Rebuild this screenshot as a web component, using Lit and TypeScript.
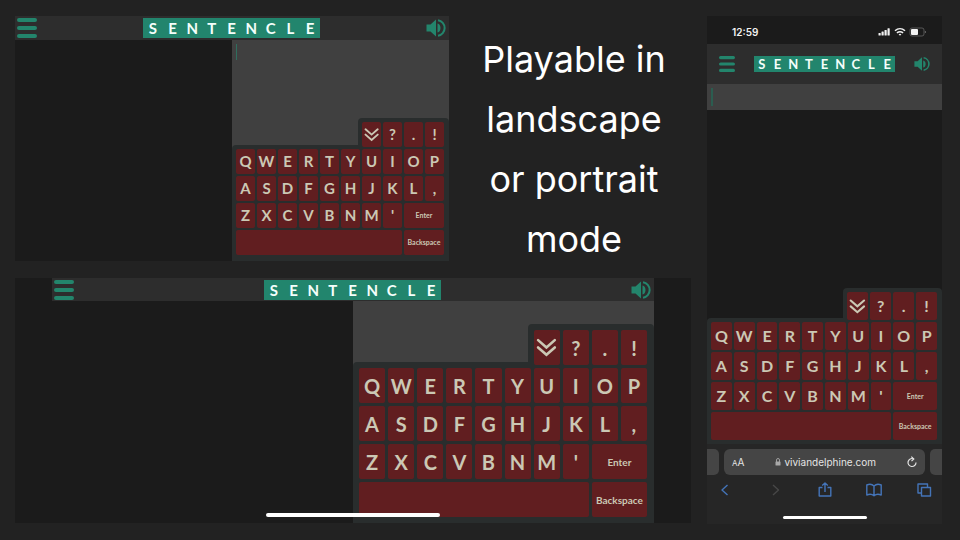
import { LitElement, html, css, svg } from "lit";
import { customElement, property } from "lit/decorators.js";

const LOGO = [..."SENTENCLE"];
const LETTERS = [..."QWERTYUIOPASDFGHJKL,ZXCVBNM'"];

@customElement("game-header")
class GameHeader extends LitElement {
  static styles = css`
    :host {
      display: flex;
      align-items: center;
      justify-content: space-between;
      box-sizing: border-box;
      height: var(--header-height, 24px);
      padding: 0 var(--header-pad-right, 3px) 0 var(--header-pad, 2px);
      background: #2d2d2d;
      color: #23856c;
    }
    button {
      display: block;
      padding: 0;
      border: 0;
      background: none;
      color: inherit;
      width: var(--icon, 20px);
      height: var(--icon, 20px);
    }
    svg {
      display: block;
      width: 100%;
      height: 100%;
    }
    h1 {
      display: grid;
      grid-template-columns: repeat(9, 1fr);
      margin: 0;
      width: var(--logo-width, 177px);
      height: var(--logo-height, 20px);
      line-height: var(--logo-height, 20px);
      background: #22856d;
      color: #f4fffb;
      font-family: Lato, sans-serif;
      font-weight: 700;
      font-size: var(--logo-font, 15px);
      text-align: center;
    }
  `;

  render() {
    return html`
      <button aria-label="Menu">
        <svg viewBox="0 0 20 20" stroke="currentColor" stroke-width="4" stroke-linecap="round">
          <path d="M2 2h16M2 10h16M2 18h16" />
        </svg>
      </button>
      <h1>${LOGO.map((c) => html`<span>${c}</span>`)}</h1>
      <button aria-label="Sound">
        <svg viewBox="0 0 20 20" fill="currentColor">
          <path d="M0.5 6.5h4L10 1.5v17l-5.500-5h-4z" />
          <path d="M11.500 5.500c4 .5 4 8.500 0 9z" />
          <path d="M12 2.200a7.900 7.900 0 0 1 0 15.600" fill="none" stroke="currentColor" stroke-width="2" />
        </svg>
      </button>
    `;
  }
}

@customElement("key-board")
class KeyBoard extends LitElement {
  static styles = css`
    :host {
      display: flex;
      flex-direction: column;
      font-family: Lato, sans-serif;
      font-weight: 700;
    }
    .tab,
    .main {
      display: grid;
      gap: var(--gap, 2px);
      grid-auto-rows: var(--key-height, 25px);
      background: #292d2d;
      box-sizing: border-box;
    }
    .tab {
      align-self: flex-end;
      z-index: 1;
      width: 42%;
      grid-template-columns: repeat(4, 1fr);
      padding: var(--pad, 4px) var(--pad-right, 5px) 0 var(--pad, 4px);
      border-radius: 4px 4px 0 0;
    }
    .main {
      grid-template-columns: repeat(10, 1fr);
      margin-top: calc(var(--gap, 2px) - var(--pad, 4px));
      padding: var(--pad, 4px) var(--pad-right, 5px) var(--pad-bottom, 6px) var(--pad, 4px);
      border-radius: 4px 0 0 0;
    }
    button {
      display: flex;
      align-items: center;
      justify-content: center;
      min-width: 0;
      padding: 0;
      border: 0;
      border-radius: 2px;
      background: #611e20;
      color: #cbc8b4;
      font: inherit;
      font-size: var(--key-font, 15px);
      line-height: 1;
    }
    .wide {
      grid-column: span 2;
      font-size: var(--label-font, 7px);
    }
    .space {
      grid-column: span 8;
    }
    svg {
      width: 80%;
    }
  `;

  render() {
    return html`
      <div class="tab">
        <button aria-label="Hide keyboard">
          <svg viewBox="0 0 20 20" fill="none" stroke="currentColor" stroke-width="2.500" stroke-linecap="round">
            <path d="M2 3l8 7 8-7M2 10l8 7 8-7" />
          </svg>
        </button>
        <button>?</button>
        <button>.</button>
        <button>!</button>
      </div>
      <div class="main">
        ${LETTERS.map((c) => html`<button>${c}</button>`)}
        <button class="wide">Enter</button>
        <button class="space" aria-label="Space"></button>
        <button class="wide">Backspace</button>
      </div>
    `;
  }
}

@customElement("landscape-view")
class LandscapeView extends LitElement {
  @property({ type: Boolean }) caret = false;

  static styles = css`
    :host {
      display: flex;
      flex-direction: column;
      background: #1b1b1b;
    }
    .board {
      flex: 1;
      display: grid;
      grid-template-columns: 1fr 1fr;
    }
    .entry {
      grid-column: 2;
      display: flex;
      flex-direction: column;
      background: #404040;
    }
    .field {
      flex: 1;
      position: relative;
      min-height: 0;
    }
    textarea {
      display: block;
      box-sizing: border-box;
      width: 100%;
      height: 100%;
      padding: 0 4px;
      border: 0;
      resize: none;
      background: none;
    }
    .caret {
      position: absolute;
      left: 4px;
      top: 4px;
      width: 1px;
      height: 16px;
      background: #2f6e5e;
    }
  `;

  render() {
    return html`
      <game-header></game-header>
      <div class="board">
        <div class="entry">
          <div class="field">
            <textarea rows="1" aria-label="Your sentence"></textarea>
            ${this.caret ? html`<span class="caret"></span>` : null}
          </div>
          <key-board></key-board>
        </div>
      </div>
    `;
  }
}

const icon = (d: string) => svg`<path d=${d} />`;

@customElement("portrait-phone")
class PortraitPhone extends LitElement {
  static styles = css`
    :host {
      display: flex;
      flex-direction: column;
      background: #1b1b1b;
      font-family: Inter, sans-serif;
      overflow: hidden;
    }
    .status {
      display: flex;
      align-items: center;
      height: 28px;
      padding: 4px 16px 0 25px;
      box-sizing: border-box;
      color: #f2f2f2;
      font-size: 10px;
      font-weight: 600;
    }
    .status svg {
      display: block;
      margin-left: auto;
    }
    game-header {
      --header-height: 40px;
      --header-pad: 12px;
      --header-pad-right: 12px;
      --icon: 16px;
      --logo-width: 141px;
      --logo-height: 16px;
      --logo-font: 13px;
    }
    .field {
      position: relative;
      height: 26px;
      background: #404040;
    }
    input {
      display: block;
      box-sizing: border-box;
      width: 100%;
      height: 100%;
      padding: 4px;
      border: 0;
      background: none;
    }
    .caret {
      position: absolute;
      left: 4px;
      top: 4px;
      width: 2px;
      height: 18px;
      background: #2b5d50;
    }
    key-board {
      margin-top: auto;
      --key-height: 28px;
      --key-font: 16px;
      --pad-bottom: 4px;
    }
    .browser {
      height: 80px;
      background: #262626;
      box-sizing: border-box;
      padding-top: 5px;
      display: flex;
      flex-direction: column;
      align-items: center;
    }
    .tabs {
      align-self: stretch;
      display: grid;
      grid-template-columns: 12px 1fr 12px;
      gap: 5px;
      height: 26px;
    }
    .edge {
      background: #454545;
    }
    .edge:first-child {
      border-radius: 0 5px 5px 0;
    }
    .edge:last-child {
      border-radius: 5px 0 0 5px;
    }
    .address {
      display: flex;
      align-items: center;
      justify-content: space-between;
      padding: 0 8px;
      border-radius: 6px;
      background: #454545;
      color: #e4e4e4;
    }
    button {
      display: flex;
      align-items: center;
      gap: 3px;
      padding: 0;
      border: 0;
      background: none;
      color: inherit;
      font: inherit;
      font-size: 10px;
    }
    .small {
      font-size: 8px;
    }
    .size {
      gap: 0;
      align-items: baseline;
    }
    svg {
      display: block;
      fill: none;
      stroke: currentColor;
    }
    .tools {
      align-self: stretch;
      display: flex;
      justify-content: space-between;
      padding: 7px 10px 0;
      color: #4474b8;
    }
    .off {
      color: #474747;
    }
    .home {
      width: 84px;
      height: 3px;
      margin-top: 18px;
      border-radius: 2px;
      background: #ffffff;
    }
  `;

  tool(label: string, d: string, off = false) {
    return html`<button class=${off ? "off" : ""} aria-label=${label}>
      <svg width="16" height="16" viewBox="0 0 16 16" stroke-width="1.400" stroke-linejoin="round">${icon(d)}</svg>
    </button>`;
  }

  render() {
    return html`
      <div class="status">
        <span>12:59</span>
        <svg width="48" height="10" viewBox="0 0 48 10">
          <g fill="#f2f2f2" stroke="none">
            <rect x="0.500" y="6" width="2.200" height="2.500" rx="0.500" />
            <rect x="3.500" y="4.500" width="2.200" height="4" rx="0.500" />
            <rect x="6.500" y="3" width="2.200" height="5.500" rx="0.500" />
            <rect x="9.500" y="1.200" width="2.200" height="7.300" rx="0.500" />
            <rect x="33" y="2" width="7" height="6" rx="1" />
          </g>
          <g stroke="#f2f2f2" stroke-width="1.500">
            <path d="M17 3.800c3-2.800 7-2.800 10 0" />
            <path d="M18.900 5.900c2-1.600 4.200-1.600 6.200 0" />
          </g>
          <path d="M20.600 7.200q1.400-1 2.800 0L22 8.800z" fill="#f2f2f2" stroke="none" />
          <rect x="32" y="1" width="14" height="8" rx="2" stroke="#656565" stroke-width="0.800" />
          <path d="M47.400 4v2" stroke="#656565" />
        </svg>
      </div>
      <game-header></game-header>
      <div class="field">
        <input aria-label="Your sentence" />
        <span class="caret"></span>
      </div>
      <key-board></key-board>
      <div class="browser">
        <div class="tabs">
          <span class="edge"></span>
          <div class="address">
            <button class="size" aria-label="Text size"><span class="small">A</span><span>A</span></button>
            <button>
              <svg width="6" height="8" viewBox="0 0 6 8">
                <rect x="0.500" y="3.500" width="5" height="4" rx="0.600" fill="#a8a8a8" stroke="none" />
                <path d="M1.500 4V2a1.500 1.500 0 0 1 3 0v2" stroke="#a8a8a8" stroke-width="0.900" />
              </svg>
              viviandelphine.com
            </button>
            <button aria-label="Reload">
              <svg width="10" height="12" viewBox="0 0 10 12" stroke-width="1.200">
                <path d="M6.500 2.800A4 4 0 1 0 9 6.500" />
                <path d="M4.300 0.600L6.800 2.900 4.500 5.200" />
              </svg>
            </button>
          </div>
          <span class="edge"></span>
        </div>
        <nav class="tools">
          ${this.tool("Back", "M10.500 3L5 8l5.500 5")}
          ${this.tool("Forward", "M6 3l5.500 5L6 13", true)}
          ${this.tool("Share", "M5.500 5.500H2.200v8.500h11.600V5.500H10.500M8 10V1M5.200 3.600L8 1l2.800 2.600")}
          ${this.tool("Bookmarks", "M8 4C6 2 3 2 0.800 3v10c2.200-1 5.200-1 7.200.8 2-1.800 5-1.800 7.200-.8V3C13 2 10 2 8 4zM8 4v9.800")}
          ${this.tool("Tabs", "M5.500 5.500h9v8.500h-9zM5.500 11H2V2h9.500v3.500")}
        </nav>
        <div class="home"></div>
      </div>
    `;
  }
}

@customElement("app-root")
class AppRoot extends LitElement {
  static styles = css`
    :host {
      display: grid;
      grid-template-columns: 676fr 235fr;
      gap: 16px;
      box-sizing: border-box;
      min-height: 100vh;
      padding: 16px 18px 16px 15px;
      background: #222222;
    }
    .left {
      display: grid;
      grid-template-rows: 1fr 1fr;
      gap: 17px;
      padding-bottom: 1px;
    }
    .top {
      display: grid;
      grid-template-columns: 434fr 242fr;
    }
    h2 {
      margin: 0 0 -12px;
      padding: 13px 0 0 8px;
      color: #ffffff;
      font-family: Inter, sans-serif;
      font-weight: 400;
      font-size: 36px;
      line-height: 60px;
      text-align: center;
      white-space: nowrap;
    }
    .wide {
      padding: 0 37px;
      --header-height: 23px;
      --key-height: 35px;
      --key-font: 20px;
      --label-font: 10px;
      --gap: 3px;
      --pad: 6px;
      --pad-right: 7px;
    }
    .home {
      position: absolute;
      left: 50%;
      bottom: 6px;
      width: 174px;
      height: 4px;
      transform: translateX(-50%);
      border-radius: 2px;
      background: #ffffff;
    }
    .bottom {
      position: relative;
      display: grid;
    }
  `;

  render() {
    return html`
      <div class="left">
        <div class="top">
          <landscape-view caret></landscape-view>
          <h2>Playable in<br />landscape<br />or portrait<br />mode</h2>
        </div>
        <div class="bottom">
          <landscape-view class="wide"></landscape-view>
          <div class="home"></div>
        </div>
      </div>
      <portrait-phone></portrait-phone>
    `;
  }
}
